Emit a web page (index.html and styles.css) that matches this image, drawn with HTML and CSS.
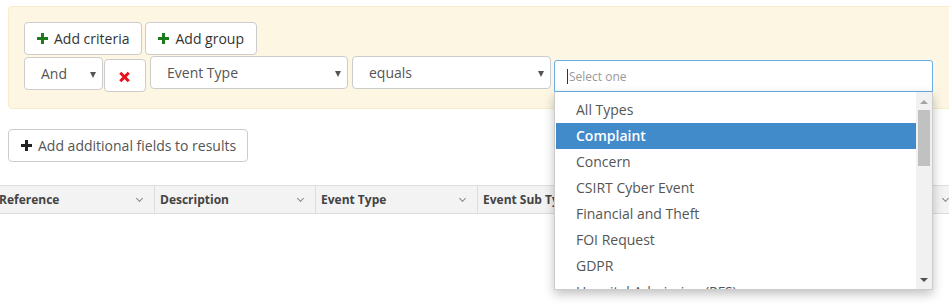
FILE: index.html
```html
<!DOCTYPE html>
<html lang="en">
<head>
    <meta charset="UTF-8">
    <title>Search</title>
    <link rel="stylesheet" href="styles.css">
</head>
<body>
    <div class="criteria">
        <div class="btnrow">
            <button class="btn"><span class="plus green"></span>Add criteria</button>
            <button class="btn"><span class="plus green"></span>Add group</button>
        </div>
        <div class="critrow">
            <div class="sel and">And<span class="caret"></span></div>
            <button class="btn remove"><span class="cross"></span></button>
            <div class="sel field">Event Type<span class="caret"></span></div>
            <div class="sel op">equals<span class="caret"></span></div>
            <div class="combo">
                <div class="search"><span class="cursor"></span>Select one</div>
                <div class="dropdown">
                    <ul class="options">
                        <li>All Types</li>
                        <li class="hl">Complaint</li>
                        <li>Concern</li>
                        <li>CSIRT Cyber Event</li>
                        <li>Financial and Theft</li>
                        <li>FOI Request</li>
                        <li>GDPR</li>
                        <li>Hospital Admission (RFS)</li>
                    </ul>
                    <div class="scrollbar">
                        <span class="arr up"></span>
                        <span class="thumb"></span>
                        <span class="arr down"></span>
                    </div>
                </div>
            </div>
        </div>
    </div>

    <button class="btn fields"><span class="plus dark"></span>Add additional fields to results</button>

    <div class="grid">
        <div class="th c1">Reference<span class="chev"></span></div>
        <div class="th c2">Description<span class="chev"></span></div>
        <div class="th c3">Event Type<span class="chev"></span></div>
        <div class="th c4">Event Sub Type<span class="chev"></span></div>
        <div class="th c5"><span class="chev"></span></div>
        <div class="th c6"><span class="chev"></span></div>
    </div>
</body>
</html>
```
FILE: styles.css
```css
html {overflow: hidden;}
body {margin: 0; min-height: 308px; font-family: "Open Sans", "DejaVu Sans", sans-serif; color: #555; font-size: 14px;}

.criteria {margin: 6px -10px 0 8px; padding: 15px 16px 16px 15px; background: #fcf6e2; border: 1px solid #faebcc; border-radius: 4px; height: 70px; position: relative; z-index: 5;}
.btnrow {display: flex; gap: 3px;}
.btn {font-family: inherit; font-size: 14px; color: #333; background: #fff; border: 1px solid #ccc; border-radius: 4px; height: 33px; padding: 0 12px; display: flex; align-items: center; gap: 6px; cursor: pointer;}
.plus {position: relative; width: 11px; height: 11px; display: inline-block;}
.plus:before, .plus:after {content: ""; position: absolute; background: currentColor;}
.plus:before {left: 4px; top: 0; width: 3px; height: 11px;}
.plus:after {left: 0; top: 4px; width: 11px; height: 3px;}
.green {color: #1d7a1d;}
.dark {color: #222;}

.critrow {display: flex; align-items: flex-start; margin-top: 1px;}
.sel {height: 31px; border: 1px solid #ccc; border-radius: 4px; background: #fff; display: flex; align-items: center; position: relative; color: #555; box-sizing: content-box;}
.caret {position: absolute; right: 6px; top: 14px; border-left: 3px solid transparent; border-right: 3px solid transparent; border-top: 6px solid #555;}
.and {width: 61px; padding-left: 16px; margin-top: 1px;}
.remove {width: 42px; height: 33px; margin: 3px 4px 0 1px; justify-content: center; padding: 0;}
.cross {position: relative; width: 10px; height: 10px; display: inline-block; margin-top: 2px;}
.cross:before, .cross:after {content: ""; position: absolute; left: 3px; top: -1px; width: 3px; height: 12px; background: #e8101a;}
.cross:before {transform: rotate(45deg);}
.cross:after {transform: rotate(-45deg);}
.field {width: 180px; padding-left: 16px;}
.op {width: 181px; padding-left: 16px; margin-left: 4px;}

.combo {margin-left: 3px; margin-top: 4px; width: 379px; position: relative;}
.search {height: 30px; border: 1px solid #66afe9; border-radius: 3px 3px 0 0; background: #fff; display: flex; align-items: center; padding-left: 12px; font-size: 12px; color: #999;}
.cursor {width: 1px; height: 15px; background: #333; margin-right: 1px;}
.dropdown {position: absolute; left: 0; top: 32px; width: 379px; height: 198px; background: #fff; border: 1px solid #ccc; border-top: 0; box-sizing: border-box; box-shadow: 0 4px 10px rgba(0,0,0,0.25); display: flex; overflow: hidden;}
.options {list-style: none; margin: 0; padding: 5px 0 0 1px; flex: 1;}
.options li {height: 26px; line-height: 26px; padding-left: 20px; white-space: nowrap;}
.options li.hl {background: #428bca; color: #fff; font-weight: 600;}
.scrollbar {width: 16px; background: #f1f1f1; position: relative;}
.thumb {position: absolute; left: 2px; top: 18px; width: 12px; height: 56px; background: #c1c1c1;}
.arr {position: absolute; left: 4px; border-left: 4px solid transparent; border-right: 4px solid transparent;}
.up {top: 8px; border-bottom: 4px solid #a3a3a3;}
.down {bottom: 7px; border-top: 4px solid #505050;}

.fields {margin: 20px 0 0 8px; padding: 0 11px 0 12px; color: #555;}

.grid {display: flex; margin: 23px 0 0 -7px; background: #f3f3f3; border-top: 1px solid #ddd; border-bottom: 1px solid #ddd; height: 27px;}
.th {position: relative; flex: none; box-sizing: border-box; padding-left: 6px; font-size: 12px; font-weight: 700; color: #444; line-height: 27px; border-right: 1px solid #ddd; white-space: nowrap; overflow: hidden;}
.chev {position: absolute; right: 12px; top: 10px; width: 4px; height: 4px; border-right: 1px solid #888; border-bottom: 1px solid #888; transform: rotate(45deg);}
.c1 {width: 162px;}
.c2 {width: 161px; padding-left: 5px;}
.c3 {width: 162px; padding-left: 5px;}
.c4 {width: 161px; padding-left: 5px;}
.c5 {width: 162px;}
.c6 {width: 160px;}
```
